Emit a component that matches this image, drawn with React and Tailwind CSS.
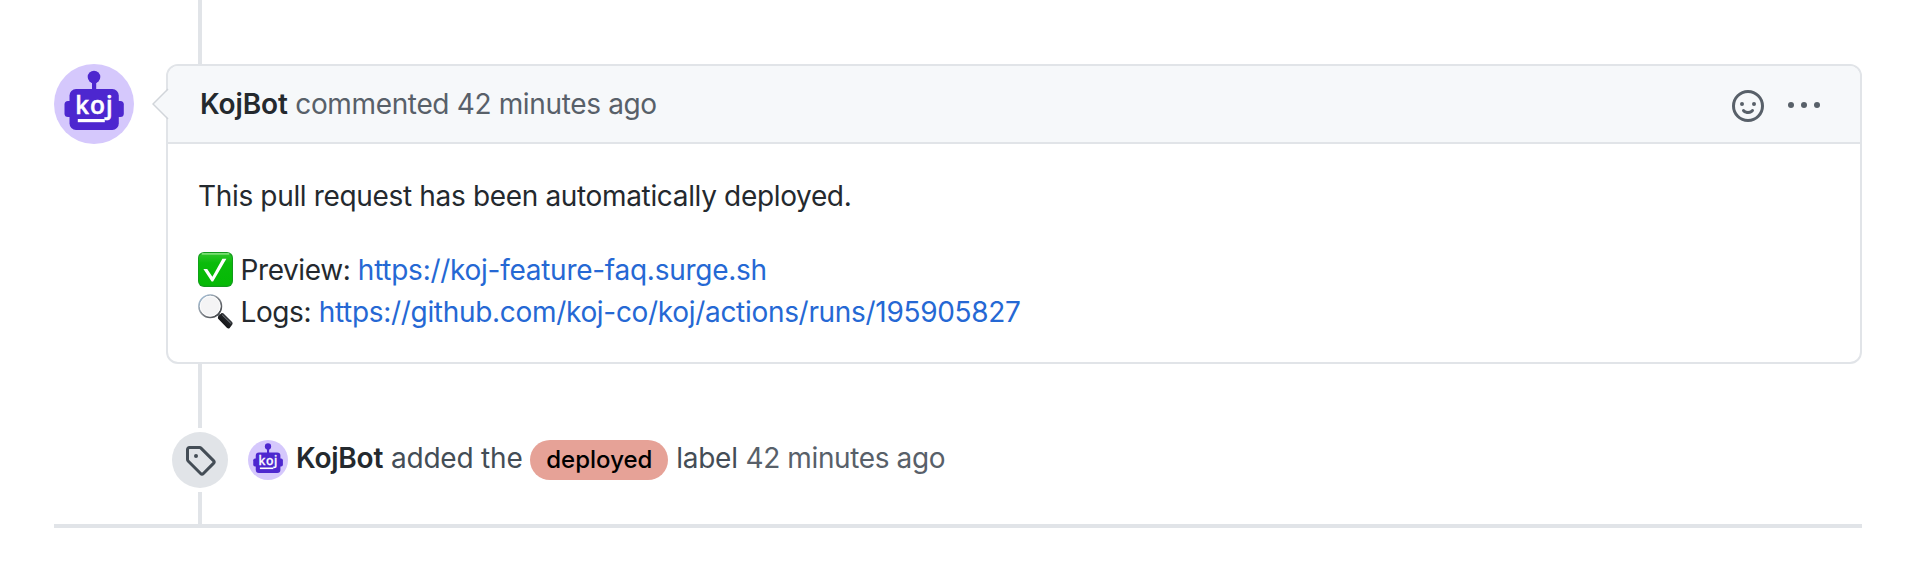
function BotAvatar({ className }) {
  return (
    <svg viewBox="0 0 80 80" className={className} role="img" aria-label="KojBot">
      <circle cx="40" cy="40" r="40" fill="#d5c8fc" />
      <g fill="#4d27cf">
        <circle cx="40" cy="13" r="6.3" />
        <rect x="38" y="17" width="4.2" height="10" />
        <rect x="10.5" y="37" width="59.3" height="16" rx="3.5" />
        <rect x="15.5" y="25" width="49.3" height="41" rx="6.5" />
      </g>
      <text
        x="21.2"
        y="50.3"
        fill="#fff"
        stroke="#fff"
        strokeWidth="0.6"
        fontFamily="'Noto Sans', sans-serif"
        fontWeight="500"
        fontSize="24.5"
        textLength="37.5"
      >
        koj
      </text>
      <rect x="23.8" y="55" width="27" height="3.2" fill="#fff" />
    </svg>
  );
}

function SmileyIcon() {
  return (
    <svg viewBox="0 0 16 16" className="size-8" fill="currentColor">
      <path
        fillRule="evenodd"
        d="M1.5 8a6.5 6.5 0 1113 0 6.5 6.5 0 01-13 0zM8 0a8 8 0 100 16A8 8 0 008 0zM5 8a1 1 0 100-2 1 1 0 000 2zm7-1a1 1 0 11-2 0 1 1 0 012 0zM5.32 9.636a.75.75 0 011.038.175l.007.009c.103.118.22.222.35.31.264.178.683.37 1.285.37.602 0 1.02-.192 1.285-.371.13-.088.247-.192.35-.31l.007-.008a.75.75 0 111.222.87l-.614-.431c.614.43.614.431.613.431v.001l-.001.002-.002.003-.005.007-.014.019a1.984 1.984 0 01-.184.213c-.16.166-.338.316-.53.445-.63.418-1.37.638-2.127.629-.946 0-1.652-.308-2.126-.63a3.32 3.32 0 01-.715-.657l-.014-.02-.005-.006-.002-.003v-.002h-.001l.613-.432-.614.43a.75.75 0 01.183-1.044h.001z"
      />
    </svg>
  );
}

function KebabIcon() {
  return (
    <svg viewBox="0 0 16 16" className="size-8" fill="currentColor">
      <circle cx="1.5" cy="7.5" r="1.5" />
      <circle cx="8" cy="7.5" r="1.5" />
      <circle cx="14.5" cy="7.5" r="1.5" />
    </svg>
  );
}

function TagIcon() {
  return (
    <svg viewBox="0 0 16 16" className="size-8" fill="currentColor">
      <path
        fillRule="evenodd"
        d="M2.5 7.775V2.75a.25.25 0 01.25-.25h5.025a.25.25 0 01.177.073l6.25 6.25a.25.25 0 010 .354l-5.025 5.025a.25.25 0 01-.354 0l-6.25-6.25a.25.25 0 01-.073-.177zm-1.5 0V2.75C1 1.784 1.784 1 2.75 1h5.025c.464 0 .91.184 1.238.513l6.25 6.25a1.75 1.75 0 010 2.474l-5.026 5.026a1.75 1.75 0 01-2.474 0l-6.25-6.25A1.75 1.75 0 011 7.775zM6 5a1 1 0 100 2 1 1 0 000-2z"
      />
    </svg>
  );
}

function CheckMark() {
  return (
    <svg viewBox="0 0 35 35" className="mb-0.5 size-[35px]">
      <defs>
        <linearGradient id="check-fill" x1="0" y1="0" x2="0" y2="1">
          <stop offset="0" stopColor="#2fc62b" />
          <stop offset="0.3" stopColor="#0bbb0b" />
          <stop offset="1" stopColor="#05b905" />
        </linearGradient>
      </defs>
      <rect width="35" height="35" rx="6" fill="#129a1c" />
      <rect x="0.8" y="1.2" width="33.2" height="32.6" rx="5.4" fill="url(#check-fill)" />
      <rect x="3.5" y="1.1" width="28" height="1.6" rx="0.8" fill="#7bdc74" />
      <path d="M5.4 17.1h3.8l5.2 7.7L24.4 6.7h4L15.1 29.6h-1.5z" fill="#fff" />
    </svg>
  );
}

function Magnifier() {
  return (
    <svg viewBox="0 0 35 35" className="mb-0.5 size-[35px]">
      <defs>
        <linearGradient id="rim" x1="0" y1="0" x2="1" y2="1">
          <stop offset="0" stopColor="#a9c8e4" />
          <stop offset="0.45" stopColor="#8d9298" />
          <stop offset="1" stopColor="#33363a" />
        </linearGradient>
        <linearGradient id="grip" x1="0" y1="1" x2="1" y2="0">
          <stop offset="0" stopColor="#050505" />
          <stop offset="0.55" stopColor="#202225" />
          <stop offset="1" stopColor="#70757c" />
        </linearGradient>
      </defs>
      <path d="M19.3 19.7l4 3.4" stroke="#71767c" strokeWidth="3" />
      <circle cx="12.2" cy="12.2" r="11.2" fill="#f4f4f5" stroke="url(#rim)" strokeWidth="1.7" />
      <circle cx="12.2" cy="12.2" r="10" fill="none" stroke="#fff" strokeWidth="0.9" />
      <path d="M20.2 22.6l3.3-3.5q.9-.5 1.8.2l8.8 8.6q1 1.2.2 2.6l-2.6 3.4q-1.2 1.2-2.6.2L20.4 25q-.9-1.2-.2-2.4z" fill="url(#grip)" />
      <path d="M24.5 21.2l8 7.8" stroke="#7c8289" strokeWidth="1" strokeLinecap="round" />
    </svg>
  );
}

export default function App() {
  return (
    <main className="h-[562px] w-[1908px] overflow-hidden bg-white font-['Inter',sans-serif] text-[28px] leading-[42px] whitespace-nowrap text-[#24292e]">
      <div className="ml-[198px] h-16 w-1 bg-[#e1e4e8]" />

      <section className="ml-[54px] flex w-[1808px] items-start gap-8">
        <BotAvatar className="size-20 shrink-0" />
        <article className="relative h-[300px] flex-1 rounded-xl border-2 border-[#e1e4e8] bg-white">
          <header className="flex h-[78px] items-center justify-between rounded-t-[10px] border-b-2 border-[#e1e4e8] bg-[#f6f8fa] pr-10 pl-8">
            <h3 className="flex gap-[7.5px]">
              <strong className="font-semibold tracking-[-0.1px]">KojBot</strong>
              <span className="tracking-[-0.35px] text-[#586069]">commented 42 minutes ago</span>
            </h3>
            <div className="flex gap-6 pt-1 text-[#586069]">
              <SmileyIcon />
              <KebabIcon />
            </div>
          </header>
          <svg viewBox="0 0 18 32" className="absolute top-[22px] -left-4 h-8 w-[18px]">
            <path d="M18 0L1 16L18 32z" fill="#f6f8fa" />
            <path d="M16 1L1 16l15 15" fill="none" stroke="#d1d5da" strokeWidth="1.5" />
          </svg>

          <div className="px-[30px] pt-[31px]">
            <p className="tracking-[-0.34px]">This pull request has been automatically deployed.</p>
            <div className="mt-8 flex h-[42px] items-center">
              <CheckMark />
              <span className="ml-[7.5px] tracking-[-0.4px]">Preview:</span>
              <a className="ml-[7.5px] tracking-[-0.27px] text-[#2568d4]">https://koj-feature-faq.surge.sh</a>
            </div>
            <div className="flex h-[42px] items-center">
              <Magnifier />
              <span className="ml-[7.5px] tracking-[-0.4px]">Logs:</span>
              <a className="ml-[7.5px] tracking-[-0.31px] text-[#2568d4]">https://github.com/koj-co/koj/actions/runs/195905827</a>
            </div>
          </div>
        </article>
      </section>

      <div className="ml-[198px] h-16 w-1 bg-[#e1e4e8]" />

      <section className="ml-[172px] flex h-16 items-center">
        <div className="flex size-14 items-center justify-center rounded-full bg-[#e1e4e8] text-[#444d56]">
          <TagIcon />
        </div>
        <BotAvatar className="ml-5 size-10" />
        <div className="ml-2 flex items-center gap-[7.8px] text-[#444d56]">
          <strong className="pb-1 font-semibold tracking-[-0.2px] text-[#24292e]">KojBot</strong>
          <span className="pb-1 tracking-[-0.2px]">added the</span>
          <span className="flex h-10 w-[138px] items-center justify-center rounded-full bg-[#e6a297] text-2xl font-medium text-black">
            deployed
          </span>
          <span className="pb-1 tracking-[-0.25px]">label</span>
          <span className="pb-1 tracking-[-0.38px] text-[#586069]">42 minutes ago</span>
        </div>
      </section>

      <div className="ml-[198px] h-8 w-1 bg-[#e1e4e8]" />
      <div className="ml-[54px] h-1 w-[1808px] bg-[#e1e4e8]" />
    </main>
  );
}
